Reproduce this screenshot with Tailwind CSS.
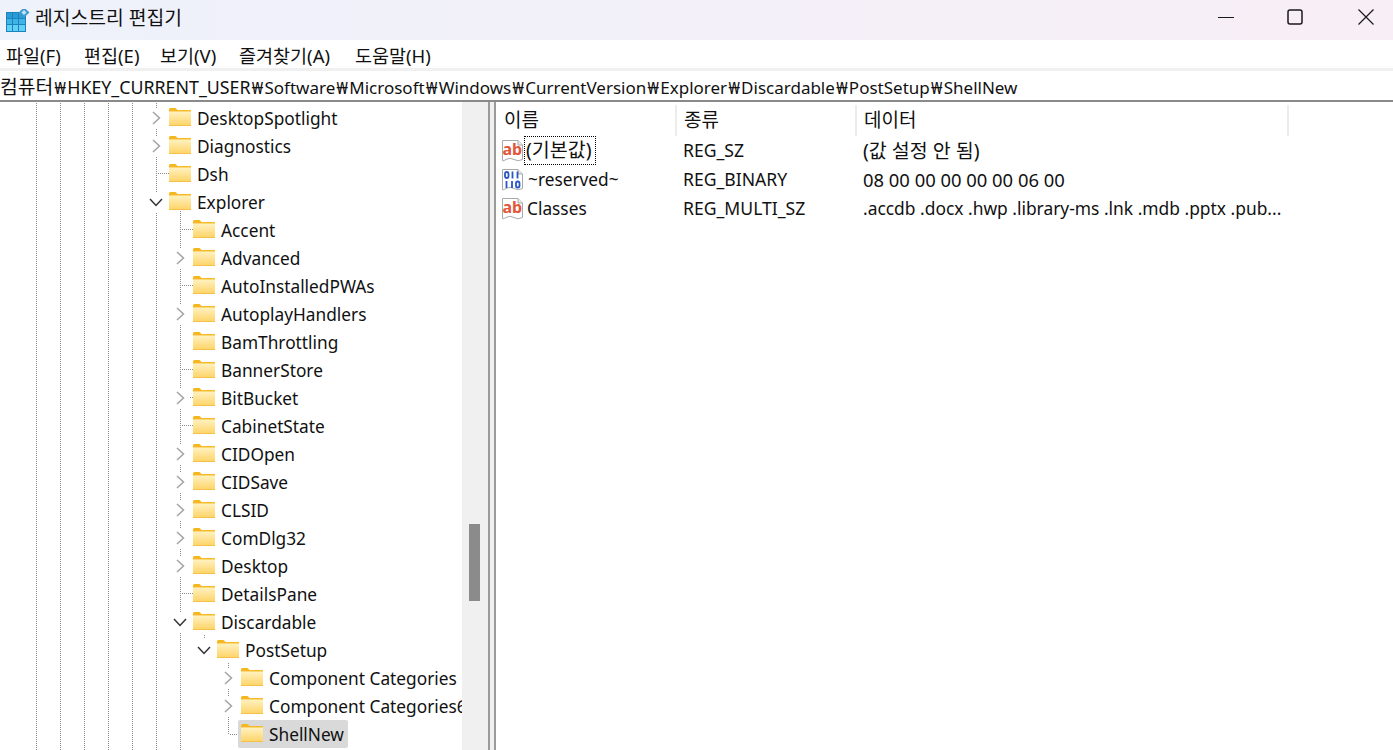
<!DOCTYPE html>
<html lang="ko">
  <head>
    <meta charset="UTF-8" />
    <title>레지스트리 편집기</title>
    <script src="https://cdn.jsdelivr.net/npm/@tailwindcss/browser@4"></script>
  </head>
  <body class="w-[1393px] h-[750px] overflow-hidden bg-white text-[17.3px] text-[#111] font-['Noto_Sans','Noto_Sans_CJK_KR',sans-serif]">
    <svg class="absolute w-0 h-0">
      <defs>
        <linearGradient id="folderfill" x1="0" y1="0" x2="0" y2="1">
          <stop offset="0" stop-color="#fff3c4" />
          <stop offset="1" stop-color="#fdd468" />
        </linearGradient>
      </defs>
      <symbol id="folder" viewBox="0 0 22 18">
        <path d="M0 1.500Q0 0 1.500 0H6.500L8.500 2H22V4H0Z" fill="#f6b61f" />
        <path d="M0 3H22V17.500H0.800Q0 17.500 0 16.700Z" fill="url(#folderfill)" />
        <path d="M0 3.500H22V2.500H0Z" fill="#f7bd2e" />
        <path d="M0 17H22V18H0Z" fill="#f3c04a" />
      </symbol>
      <symbol id="ricon" viewBox="0 0 23 24">
        <path d="M1.500 1.500H17L21.500 6V20.500Q17 23 13 20.500T5 20.500T1.500 21Z" fill="#fff" stroke="#a9a9a9" stroke-width="1" />
        <path d="M17 1.500V6H21.500" fill="#e9e9e9" stroke="#a9a9a9" stroke-width="1" />
      </symbol>
    </svg>

    <!-- title bar -->
    <div class="h-[40px] flex items-center bg-gradient-to-r from-[#eef2fb] to-[#f8eef6]">
      <svg class="ml-[6px] mt-[1px] w-[24px] h-[24px]" viewBox="0 0 24 24">
        <rect x="0" y="3" width="20" height="20" fill="#1b84bd" />
        <rect x="1" y="4" width="5" height="5" fill="#2a9bd6" />
        <rect x="7" y="4" width="5" height="5" fill="#2a9bd6" />
        <rect x="13" y="4" width="6" height="5" fill="#2a9bd6" />
        <rect x="1" y="10" width="5" height="5" fill="#3fb3e6" />
        <rect x="7" y="10" width="5" height="5" fill="#3fb3e6" />
        <rect x="13" y="10" width="6" height="5" fill="#3fb3e6" />
        <rect x="1" y="16" width="5" height="6" fill="#62d0f6" />
        <rect x="7" y="16" width="5" height="6" fill="#62d0f6" />
        <rect x="13" y="16" width="6" height="6" fill="#62d0f6" />
        <path d="M18 -1.500L23.500 3.500L18 8.500L12.500 3.500Z" fill="#3f9ad0" />
        <path d="M18 1L20.500 3.500L18 6L15.500 3.500Z" fill="#bfe6f7" />
      </svg>
      <span class="ml-[5px] -mt-[4px] text-[19.3px]">레지스트리 편집기</span>
      <div class="ml-auto mr-[19px] -mt-[6px] flex">
        <svg class="w-[16px] h-[16px] mr-[53px]" viewBox="0 0 16 16"><path d="M0 8.500H16" stroke="#1a1a1a" stroke-width="1" /></svg>
        <svg class="w-[16px] h-[16px] mr-[55px]" viewBox="0 0 16 16"><rect x="1" y="1" width="14" height="14" rx="2" fill="none" stroke="#1a1a1a" stroke-width="1.500" /></svg>
        <svg class="w-[16px] h-[16px]" viewBox="0 0 16 16"><path d="M0.500 0.500L15.500 15.500M15.500 0.500L0.500 15.500" stroke="#1a1a1a" stroke-width="1.200" /></svg>
      </div>
    </div>

    <!-- menu -->
    <div class="h-[28px] flex items-center pt-[3px] pl-[6px] text-[18.5px]">
      <span class="w-[78px]">파일(F)</span>
      <span class="w-[76px]">편집(E)</span>
      <span class="w-[79px]">보기(V)</span>
      <span class="w-[116px]">즐겨찾기(A)</span>
      <span>도움말(H)</span>
    </div>
    <div class="h-[3px] bg-[#f0f0f0]"></div>

    <!-- address -->
    <div class="h-[29px] flex items-center pt-[4px] whitespace-nowrap text-[17px]"><span class="text-[19.3px]">컴퓨터</span><span class="w-[14px] text-center">₩</span><span class="text-[17.8px]">HKEY_CURRENT_USER</span><span class="w-[14px] text-center">₩</span>Software<span class="w-[14px] text-center">₩</span>Microsoft<span class="w-[14px] text-center">₩</span>Windows<span class="w-[14px] text-center">₩</span>CurrentVersion<span class="w-[14px] text-center">₩</span>Explorer<span class="w-[14px] text-center">₩</span>Discardable<span class="w-[14px] text-center">₩</span>PostSetup<span class="w-[14px] text-center">₩</span>ShellNew</div>
    <div class="h-[2px] bg-[#8a8a8a]"></div>

    <div class="flex h-[648px]">
      <!-- tree -->
      <div class="relative w-[462px] shrink-0 overflow-hidden pt-[2px]">
        <svg id="guides" class="absolute left-0 top-0" width="462" height="648"></svg>
        <div id="tree" class="relative"></div>
      </div>

      <!-- scrollbar -->
      <div class="w-[26px] shrink-0 bg-[#f0f0f0] pt-[422px] pl-[7px]">
        <div class="w-[11px] h-[77px] bg-[#8b8b8b]"></div>
      </div>

      <!-- splitter -->
      <div class="w-[8px] shrink-0 bg-[#f0f0f0] border-x-2 border-[#9a9a9a]"></div>

      <!-- values -->
      <div class="flex-1 min-w-0">
        <div class="h-[34px] flex items-center pt-[2px] text-[19px]">
          <div class="w-[181px] h-[31px] pl-[8px] flex items-center border-r-2 border-[#ececec]">이름</div>
          <div class="w-[180px] h-[31px] pl-[7px] flex items-center border-r-2 border-[#ececec]">종류</div>
          <div class="w-[432px] h-[31px] pl-[7px] flex items-center border-r-2 border-[#ececec]">데이터</div>
        </div>
        <div class="h-[29px] flex items-center">
          <svg class="ml-[5px] w-[23px] h-[24px] shrink-0" viewBox="0 0 23 24"><use href="#ricon" /><text x="1.500" y="15.500" font-size="16" font-weight="700" fill="#e2563a" font-family="Noto Sans">ab</text></svg>
          <span class="w-[153px] shrink-0"><span class="block w-[72px] h-[29px] leading-[26px] px-[1px] border border-dotted border-black text-[19.5px] whitespace-nowrap">(기본값)</span></span>
          <span class="w-[180px] pl-[6px] shrink-0 text-[17.6px]">REG_SZ</span>
          <span class="pl-[6px] whitespace-nowrap text-[19.5px]">(값 설정 안 됨)</span>
        </div>
        <div class="h-[29px] flex items-center">
          <svg class="ml-[5px] w-[23px] h-[24px] shrink-0" viewBox="0 0 23 24">
            <use href="#ricon" />
            <g fill="none" stroke="#2a56c6" stroke-width="1.800">
              <rect x="4" y="4" width="3.500" height="6" rx="1.700" />
              <path d="M11.500 3.500V10.500M16.500 3.500V10.500" />
              <path d="M5.500 13V20M11 13V20" />
              <rect x="15" y="13.500" width="3.500" height="6" rx="1.700" />
            </g>
          </svg>
          <span class="w-[153px] pl-[4px] shrink-0">~reserved~</span>
          <span class="w-[180px] pl-[6px] shrink-0 text-[17.6px]">REG_BINARY</span>
          <span class="pl-[6px] whitespace-nowrap text-[18.4px]">08 00 00 00 00 00 06 00</span>
        </div>
        <div class="h-[29px] flex items-center">
          <svg class="ml-[5px] w-[23px] h-[24px] shrink-0" viewBox="0 0 23 24"><use href="#ricon" /><text x="1.500" y="15.500" font-size="16" font-weight="700" fill="#e2563a" font-family="Noto Sans">ab</text></svg>
          <span class="w-[153px] pl-[3px] shrink-0">Classes</span>
          <span class="w-[180px] pl-[6px] shrink-0 text-[17.6px]">REG_MULTI_SZ</span>
          <span class="pl-[6px] whitespace-nowrap text-[17.4px]">.accdb .docx .hwp .library-ms .lnk .mdb .pptx .pub...</span>
        </div>
      </div>
    </div>

    <script>
      // name, level, state: c = collapsed, o = open, n = leaf
      var rows = [
        ["DesktopSpotlight", 0, "c"], ["Diagnostics", 0, "c"], ["Dsh", 0, "n"], ["Explorer", 0, "o"],
        ["Accent", 1, "n"], ["Advanced", 1, "c"], ["AutoInstalledPWAs", 1, "n"], ["AutoplayHandlers", 1, "c"],
        ["BamThrottling", 1, "n"], ["BannerStore", 1, "n"], ["BitBucket", 1, "c"], ["CabinetState", 1, "n"],
        ["CIDOpen", 1, "c"], ["CIDSave", 1, "c"], ["CLSID", 1, "c"], ["ComDlg32", 1, "c"],
        ["Desktop", 1, "c"], ["DetailsPane", 1, "n"], ["Discardable", 1, "o"], ["PostSetup", 2, "o"],
        ["Component Categories", 3, "c"], ["Component Categories64", 3, "c"], ["ShellNew", 3, "n"]
      ];

      var chevrons = {
        c: '<svg class="w-[9px] h-[14px]" viewBox="0 0 9 14"><path d="M1 1L7.500 7L1 13" fill="none" stroke="#a3a3a3" stroke-width="1.500" /></svg>',
        o: '<svg class="w-[14px] h-[9px]" viewBox="0 0 14 9"><path d="M1 1L7 7.500L13 1" fill="none" stroke="#333" stroke-width="1.500" /></svg>',
        n: ''
      };

      var html = "";
      rows.forEach(function (row) {
        var left = 146 + row[1] * 24;
        var mid = row[2] == "n" ? "" : "bg-white";
        html += '<div class="flex items-center h-[28px] w-max whitespace-nowrap" style="padding-left:' + left + 'px">' +
          '<div class="w-[20px] h-[20px] shrink-0 flex items-center justify-center ' + mid + '">' + chevrons[row[2]] + '</div>' +
          '<div class="' + (row[0] == "ShellNew" ? "bg-[#d9d9d9] rounded-[2px] -mt-[1px] pt-[1px]" : "") + ' flex items-center shrink-0 h-[28px] pl-[3px] pr-[4px]">' +
          '<svg class="w-[22px] h-[18px] shrink-0 -mt-[2px]"><use href="#folder" /></svg>' +
          '<span class="ml-[6px] mt-[2px]">' + row[0] + '</span></div></div>';
      });
      document.getElementById("tree").innerHTML = html;

      // tree guide lines, y is relative to the pane (window y - 102)
      var lines = [
        [36, 0, 36, 648], [60, 0, 60, 648], [84, 0, 84, 648], [108, 0, 108, 648], [132, 0, 132, 648],
        [156, 0, 156, 648], [157, 71, 168, 71],
        [180, 100, 180, 648], [181, 127, 192, 127], [181, 183, 192, 183], [181, 267, 192, 267], [181, 295, 192, 295], [181, 323, 192, 323], [181, 491, 192, 491],
        [204, 532, 204, 536],
        [228, 560, 228, 632], [229, 632, 239, 632]
      ];
      var svg = "";
      lines.forEach(function (l) {
        svg += '<line x1="' + (l[0] + 0.5) + '" y1="' + (l[1] + 0.5) + '" x2="' + (l[2] + 0.5) + '" y2="' + (l[3] + 0.5) + '" stroke="#8a8a8a" stroke-dasharray="1 1" shape-rendering="crispEdges" />';
      });
      document.getElementById("guides").innerHTML = svg;
    </script>
  </body>
</html>
